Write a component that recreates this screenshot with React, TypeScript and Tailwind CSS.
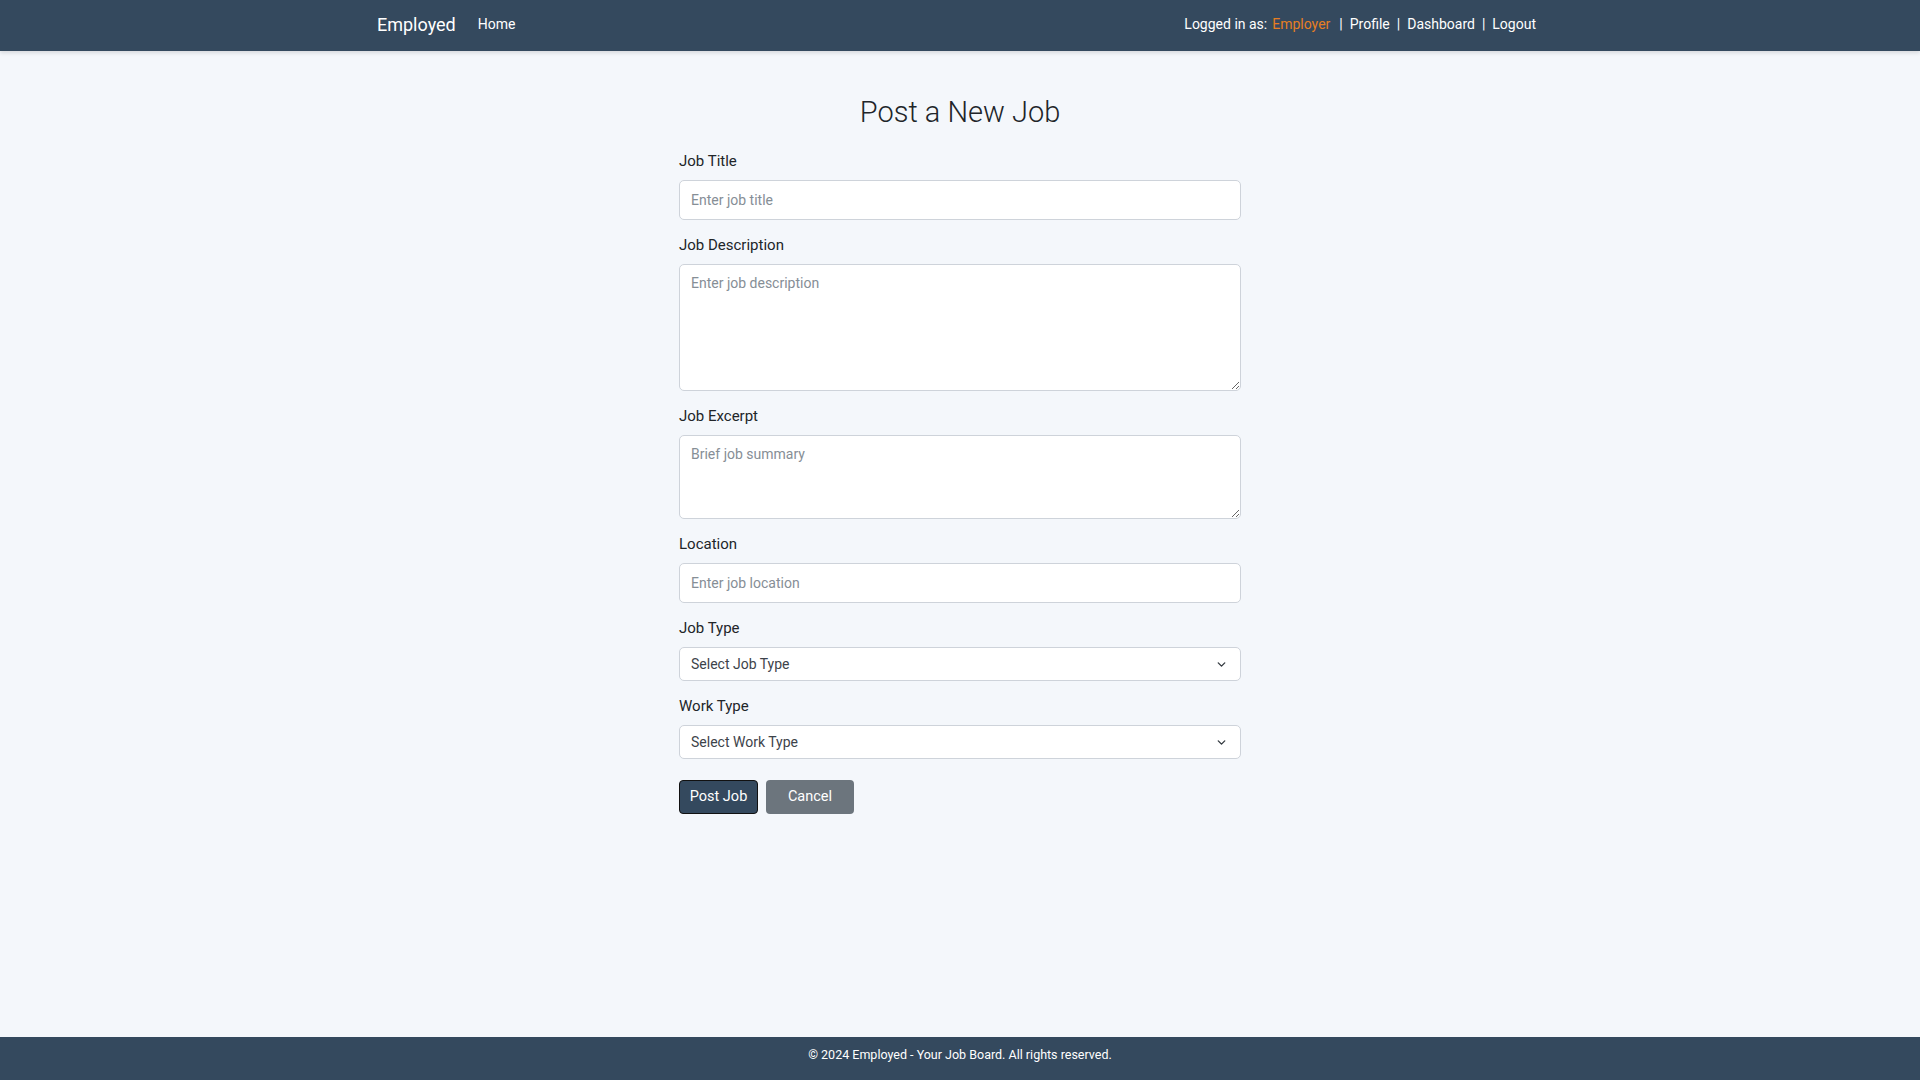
import { ChevronDown } from "lucide-react";

function Field({ label, children, last }: { label: string; children: React.ReactNode; last?: boolean }) {
  return (
    <div className={last ? "mb-[21px]" : "mb-[15px]"}>
      <label className="block text-[15px] leading-[21px] font-normal text-[#212529] mb-[8px]">{label}</label>
      {children}
    </div>
  );
}

function SelectBox({ placeholder }: { placeholder: string }) {
  return (
    <div className="relative">
      <select
        defaultValue=""
        className="w-full h-[34px] appearance-none bg-white border border-[#ced3da] rounded-[5px] pl-[11px] pr-8 text-[14px] text-[#3d434a] outline-none"
      >
        <option value="">{placeholder}</option>
      </select>
      <ChevronDown className="absolute right-[13px] top-[11px] w-[13px] h-[13px] text-[#343a40] pointer-events-none" strokeWidth={2.5} />
    </div>
  );
}

export default function App() {
  const inputCls =
    "w-full bg-white border border-[#ced3da] rounded-[5px] px-[11px] text-[14px] text-[#212529] placeholder:text-[#868e96] outline-none";

  return (
    <div className="min-h-screen flex flex-col bg-[#f4f7fb] font-['Roboto',sans-serif]">
      {/* NAVBAR */}
      <nav className="h-[51px] bg-[#34495e] shadow-[0_2px_4px_rgba(0,0,0,0.12)] relative z-10">
        <div className="w-[1164px] mx-auto h-full flex items-center justify-between pb-[2px]">
          <div className="flex items-center">
            <span className="text-white text-[18px] ml-[-1px]">Employed</span>
            <span className="text-white text-[14px] ml-[22px]">Home</span>
          </div>
          <div className="flex items-center text-white text-[14px] mr-[6px]">
            <span>Logged in as:</span>
            <span className="text-[#e67e22] ml-[5px]">Employer</span>
            <span className="ml-[9px] mr-[7px]">|</span>
            <span>Profile</span>
            <span className="mx-[7px]">|</span>
            <span>Dashboard</span>
            <span className="mx-[7px]">|</span>
            <span>Logout</span>
          </div>
        </div>
      </nav>

      {/* FORM */}
      <main className="flex-1 pt-[43px]">
        <div className="w-[562px] mx-auto">
          <h2 className="text-center text-[29px] leading-[36px] font-light text-[#212529] mb-[21px]">Post a New Job</h2>

          <Field label="Job Title">
            <input className={`${inputCls} h-10`} placeholder="Enter job title" />
          </Field>

          <Field label="Job Description">
            <textarea className={`${inputCls} h-[127px] py-[8px] block`} placeholder="Enter job description" />
          </Field>

          <Field label="Job Excerpt">
            <textarea className={`${inputCls} h-[84px] py-[8px] block`} placeholder="Brief job summary" />
          </Field>

          <Field label="Location">
            <input className={`${inputCls} h-10`} placeholder="Enter job location" />
          </Field>

          <Field label="Job Type">
            <SelectBox placeholder="Select Job Type" />
          </Field>

          <Field label="Work Type" last>
            <SelectBox placeholder="Select Work Type" />
          </Field>

          <div className="flex gap-[8px]">
            <button className="h-[34px] w-[79px] rounded-[4px] bg-[#34495e] border border-[#111] text-white text-[14.5px]">Post Job</button>
            <button className="h-[34px] w-[88px] rounded-[4px] bg-[#6c757d] text-white text-[14.5px]">Cancel</button>
          </div>
        </div>
      </main>

      {/* FOOTER */}
      <footer className="h-[43px] bg-[#34495e] pt-[10px] text-center">
        <span className="text-white text-[12.5px] leading-[16px] block">© 2024 Employed - Your Job Board. All rights reserved.</span>
      </footer>
    </div>
  );
}
